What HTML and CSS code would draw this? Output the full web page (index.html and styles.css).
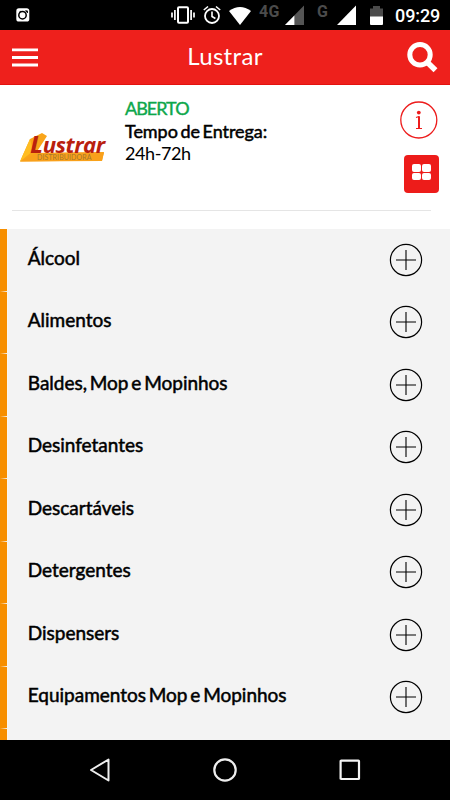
FILE: index.html
```html
<!DOCTYPE html>
<html lang="pt-BR">
<head>
<meta charset="utf-8">
<title>Lustrar</title>
<link rel="stylesheet" href="styles.css">
</head>
<body>
<svg width="0" height="0" class="defs">
  <symbol id="plus" viewBox="0 0 34 34"><circle cx="17" cy="17" r="15.6" fill="none" stroke="#000" stroke-width="1.2"/><path d="M17 7v20M7 17h20" stroke="#000" stroke-width="1.1"/></symbol>
</svg>
<div class="screen">
  <div class="status">
    <svg class="camera" width="14" height="14" viewBox="0 0 14 14"><rect x=".3" y=".3" width="13" height="13.2" rx="2.6" fill="#fff"/><circle cx="6.5" cy="7.2" r="3.7" fill="none" stroke="#000" stroke-width="1.5"/><path d="M3 4.5l2-1.5M9.5 2.7l2 .2v2z" stroke="#000" fill="#000" stroke-width=".8"/></svg>
    <svg class="vibrate" width="24" height="20" viewBox="0 0 24 20"><rect x="7" y="2.2" width="10" height="15.6" rx="1" fill="none" stroke="#fff" stroke-width="2"/><path d="M3.9 5v10M20.1 5v10M1 7.5v5M23 7.5v5" stroke="#fff" stroke-width="1.7"/></svg>
    <svg class="alarm" width="18" height="20" viewBox="0 0 18 20"><circle cx="9" cy="11" r="7" fill="none" stroke="#fff" stroke-width="1.8"/><path d="M.8 5L5 1.5M17.2 5L13 1.5M9 6.5v5l3.4 2" fill="none" stroke="#fff" stroke-width="1.6"/></svg>
    <svg class="wifi" width="22" height="20" viewBox="0 0 22 20"><path d="M0 5Q11-3 22 5L11 19z" fill="#fff"/></svg>
    <span class="net net-4g">4G</span>
    <svg class="signal-a" width="19" height="20" viewBox="0 0 19 20"><path d="M19 .5V20H0z" fill="#555"/><path d="M9.4 10.4V20H0z" fill="#fff"/></svg>
    <span class="net net-g">G</span>
    <svg class="signal-b" width="19" height="20" viewBox="0 0 19 20"><path d="M19 .5V20H0z" fill="#fff"/></svg>
    <svg class="battery" width="13" height="19" viewBox="0 0 13 19"><path d="M0 2.5h3V0h7v2.500h3V11H0z" fill="#4b4b4b"/><path d="M0 10.500h13V18a1 1 0 0 1-1 1H1a1 1 0 0 1-1-1z" fill="#fff"/></svg>
    <span class="clock">09:29</span>
  </div>
  <header class="bar">
    <svg width="26" height="20" viewBox="0 0 26 20"><path d="M0 2.800h26M0 10.500h26M0 18h26" stroke="#fff" stroke-width="2.800"/></svg>
    <h1>Lustrar</h1>
    <svg width="32" height="32" viewBox="0 0 32 32"><circle cx="14" cy="13.800" r="10.200" fill="none" stroke="#fff" stroke-width="5"/><path d="M20.500 20.500l9 8.700" stroke="#fff" stroke-width="5.600"/></svg>
  </header>
  <section class="store">
    <div class="logo">
      <svg class="logo-mark" width="86" height="31" viewBox="0 0 86 31">
        <path d="M0 29.500L10 7 22 1 27 4 16 21 84 20 82 29z" fill="#f9a51a"/>
        <path d="M0 29.500L17 21 84 20.500 82 28.500z" fill="#f9a01b"/>
        <path d="M0 29.500L10 7 13 19z" fill="#ffbd22"/>
      </svg>
      <span class="logo-name">Lustrar</span>
      <span class="logo-sub">DISTRIBUIDORA</span>
    </div>
    <div class="details">
      <p class="open">ABERTO</p>
      <p class="label">Tempo de Entrega:</p>
      <p class="time">24h-72h</p>
    </div>
    <div class="actions">
      <svg width="38" height="38" viewBox="0 0 38 38"><circle cx="18.800" cy="19" r="18" fill="none" stroke="#ed1c1c" stroke-width="1.300"/><circle cx="18.800" cy="11.600" r="1.900" fill="#ed1c1c"/><path d="M16 16.500l3-1M16 27.500h6" fill="none" stroke="#ed1c1c" stroke-width="1.200"/><path d="M19 15.200v12.300" stroke="#ed1c1c" stroke-width="2"/></svg>
      <div class="grid-button"><i></i><i></i><i></i><i></i></div>
    </div>
  </section>
  <ul class="categories">
    <li><span>Álcool</span><svg><use href="#plus"/></svg></li>
    <li><span>Alimentos</span><svg><use href="#plus"/></svg></li>
    <li><span>Baldes, Mop e Mopinhos</span><svg><use href="#plus"/></svg></li>
    <li><span>Desinfetantes</span><svg><use href="#plus"/></svg></li>
    <li><span>Descartáveis</span><svg><use href="#plus"/></svg></li>
    <li><span>Detergentes</span><svg><use href="#plus"/></svg></li>
    <li><span>Dispensers</span><svg><use href="#plus"/></svg></li>
    <li><span>Equipamentos Mop e Mopinhos</span><svg><use href="#plus"/></svg></li>
    <li></li>
  </ul>
  <nav class="system">
    <svg width="22" height="26" viewBox="0 0 22 26"><path d="M19.500 2.500v21L2 13z" fill="none" stroke="#eee" stroke-width="2" stroke-linejoin="round"/></svg>
    <svg width="26" height="26" viewBox="0 0 26 26"><circle cx="13" cy="13" r="10.700" fill="none" stroke="#eee" stroke-width="2.200"/></svg>
    <svg width="22" height="22" viewBox="0 0 22 22"><rect x="1.600" y="1.600" width="18.400" height="18.400" rx=".6" fill="none" stroke="#f4f4f4" stroke-width="2.200"/></svg>
  </nav>
</div>
</body>
</html>
```
FILE: styles.css
```css
* { box-sizing: border-box; margin: 0; padding: 0; }
body { width: 450px; height: 800px; overflow: hidden; background: #fff; color: #000; font-family: Lato, "Liberation Sans", sans-serif; }
svg { display: block; flex: none; }
.defs { position: absolute; }
.screen { height: 800px; display: flex; flex-direction: column; }

.status { height: 30px; flex: none; background: #000; color: #fff; display: flex; align-items: center; font-family: Roboto, sans-serif; }
.camera { margin-left: 16px; }
.vibrate { margin-left: 141px; }
.alarm { margin-left: 8px; }
.wifi { margin-left: 8px; margin-top: 1px; }
.net { color: #4b4b4b; font-size: 16px; font-weight: 700; line-height: 16px; margin-top: -7px; }
.net-4g { width: 26px; margin-left: 8px; letter-spacing: 0.4px; }
.net-g { width: 21px; margin-left: 13px; }
.signal-b { margin-left: -1px; }
.battery { margin-left: 14px; }
.clock { margin-left: 12px; font-size: 18px; font-weight: 500; line-height: 20px; letter-spacing: -0.1px; margin-top: 2px; }

.bar { height: 55px; flex: none; padding: 0 12px; background: #ee201c; border-bottom: 1px solid #e3120f; color: #fff; display: flex; align-items: center; justify-content: space-between; }
.bar h1 { font-size: 24px; font-weight: 400; line-height: 30px; letter-spacing: 0.35px; margin: -2px 0 0 6px; }

.store { height: 126px; flex: none; margin: 0 19px 18px 12px; border-bottom: 1px solid #e5e5e5; display: flex; }
.logo { position: relative; width: 86px; height: 31px; margin: 47px 0 0 8px; }
.logo-mark { position: absolute; left: 0; top: 0; }
.logo-name { position: absolute; left: 10px; top: 1px; font: italic 700 21px/21px "Open Sans", Lato, sans-serif; letter-spacing: -0.5px; color: #b9200e; transform: scaleX(1.06); transform-origin: left; }
.logo-name::first-letter { font-size: 24px; }
.logo-sub { position: absolute; left: 17px; top: 22px; font-size: 7px; line-height: 7px; letter-spacing: 0.1px; color: #a4782c; }
.details { margin: 12px 0 0 19px; font-size: 18px; line-height: 22.500px; }
.open { color: #0da74b; -webkit-text-stroke: 0.4px; letter-spacing: -1px; }
.label { -webkit-text-stroke: 0.5px; white-space: nowrap; word-spacing: -1.900px; letter-spacing: -0.050px; }
.time { letter-spacing: -0.4px; }
.actions { margin: 16px -7px 0 auto; display: flex; flex-direction: column; align-items: flex-end; gap: 16px; }
.grid-button { width: 35px; height: 38px; margin-right: -0.5px; border-radius: 4px; background: #ed1c1a; display: grid; grid-template-columns: 9px 9px; grid-template-rows: 7.500px 7.500px; gap: 1px; place-content: center; padding-bottom: 4px; }
.grid-button i { background: #fff; border-radius: 2px; }

.categories { flex: 1; min-height: 0; overflow: hidden; list-style: none; background: #f3f3f3; }
.categories li { height: 62.500px; display: flex; align-items: center; justify-content: space-between; padding: 0 27px 0 20px; border-left: 7px solid #f78f00; border-bottom: 1px solid #f3f3f3; background: #f3f3f3; box-shadow: inset 1px 0 #fbf7f0; }
.categories span { font-size: 19px; line-height: 24px; -webkit-text-stroke: 0.5px; margin: -4px 0 0 0.800px; word-spacing: -2px; letter-spacing: -0.020px; }
.categories svg { width: 34px; height: 34px; }

.system { height: 60px; flex: none; background: #000; display: flex; align-items: center; justify-content: space-between; padding: 0 89px; }
```
